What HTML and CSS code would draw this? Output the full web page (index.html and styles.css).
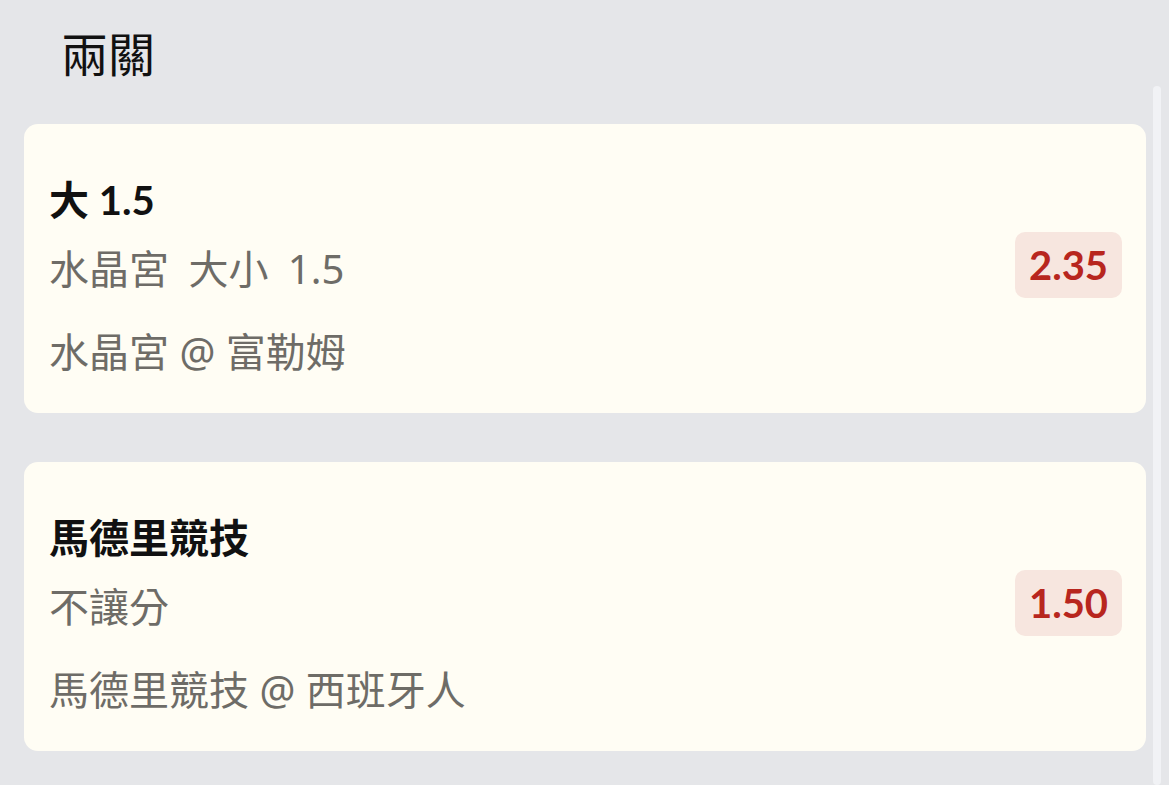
FILE: index.html
```html
<!DOCTYPE html>
<html lang="zh-Hant">
<head>
<meta charset="utf-8">
<link rel="stylesheet" href="styles.css">
</head>
<body>
<div class="page">
  <main class="content">
    <h1 class="heading">兩關</h1>
    <section class="card">
      <div class="info">
        <div class="pick">大 1.5</div>
        <div class="market">水晶宮 大小 1.5</div>
        <div class="match">水晶宮 @ 富勒姆</div>
      </div>
      <div class="odds">2.35</div>
    </section>
    <section class="card">
      <div class="info">
        <div class="pick">馬德里競技</div>
        <div class="market">不讓分</div>
        <div class="match">馬德里競技 @ 西班牙人</div>
      </div>
      <div class="odds">1.50</div>
    </section>
  </main>
  <div class="scrolltrack"></div>
</div>
</body>
</html>
```
FILE: styles.css
```css
html, body {
  margin: 0;
  padding: 0;
  background: #e5e6e9;
  font-family: Lato, "Noto Sans CJK TC", sans-serif;
}
.page {
  display: flex;
  height: 785px;
  overflow: hidden;
}
.content {
  width: 1122px;
  margin-left: 24px;
  display: flex;
  flex-direction: column;
  flex-shrink: 0;
}
.content > * {
  flex-shrink: 0;
}
.heading {
  margin: 0 0 0 37px;
  padding-top: 24px;
  height: 124px;
  box-sizing: border-box;
  font-family: "Noto Sans CJK TC", sans-serif;
  font-size: 47px;
  line-height: 56px;
  font-weight: 400;
  color: #111;
}
.card {
  background: #fffdf4;
  border-radius: 14px;
  display: flex;
  align-items: flex-start;
  justify-content: space-between;
  padding: 52px 24px 37px 25px;
  margin-bottom: 49px;
}
.info {
  display: flex;
  flex-direction: column;
}
.pick {
  font-size: 40px;
  line-height: 48px;
  font-weight: 700;
  color: #111;
}
.market,
.match {
  font-family: "Noto Sans", "Noto Sans CJK TC", sans-serif;
  font-size: 40px;
  line-height: 48px;
  color: #6e6c67;
}
.market {
  margin-top: 21px;
  word-spacing: 9px;
}
.match {
  margin-top: 35px;
}
.odds {
  background: #f7e6df;
  color: #b8261e;
  border-radius: 10px;
  width: 107px;
  height: 66px;
  display: flex;
  align-items: center;
  justify-content: center;
  font-size: 40px;
  font-weight: 700;
  margin-top: 56px;
}
.scrolltrack {
  width: 8px;
  margin-left: 7px;
  margin-top: 86px;
  background: #f1f2f5;
  border-radius: 4px;
  flex-shrink: 0;
}
```
